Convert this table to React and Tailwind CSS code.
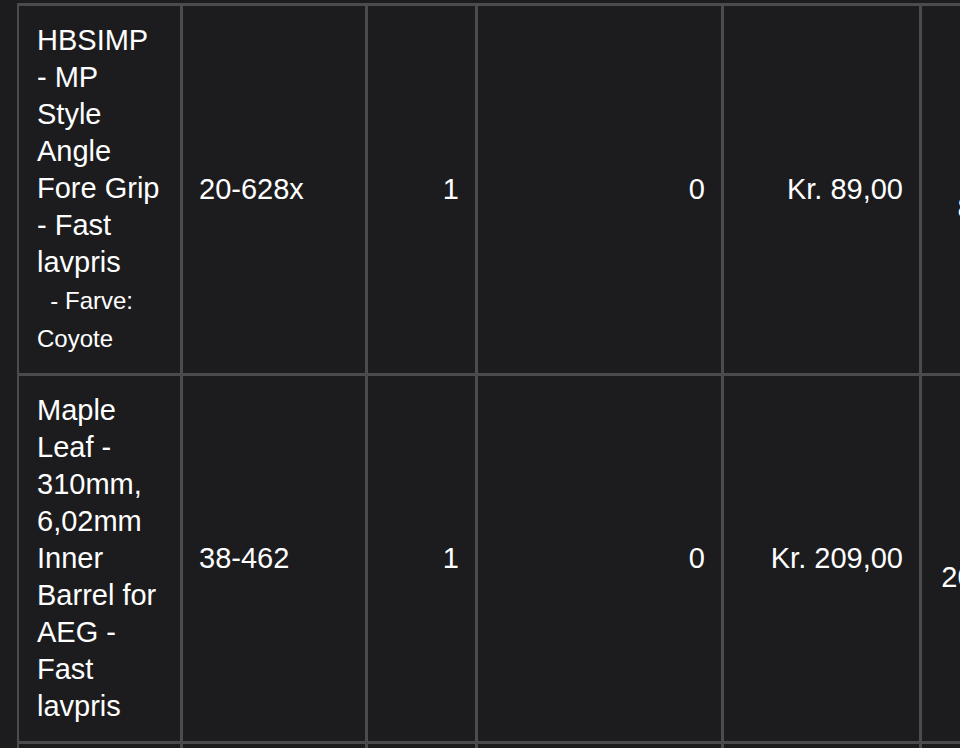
import React from "react";

const rows = [
  {
    name: "HBSIMP - MP Style Angle Fore Grip - Fast lavpris",
    variant: "- Farve: Coyote",
    sku: "20-628x",
    qty: "1",
    stock: "0",
    price: "Kr. 89,00",
    total: "Kr. 89,00",
  },
  {
    name: "Maple Leaf - 310mm, 6,02mm Inner Barrel for AEG - Fast lavpris",
    sku: "38-462",
    qty: "1",
    stock: "0",
    price: "Kr. 209,00",
    total: "Kr. 209,00",
  },
];

const cell = "border-r-[3px] border-b-[3px] border-[#4b4b4d] py-4";

const OrderTable = () => (
  <div className="ml-[17px] mt-[3px] w-[1032px] grid grid-cols-[164px_185px_110px_246px_198px_127px] border-l-2 border-t-[3px] border-[#4b4b4d]">
    {rows.map((r) => (
      <React.Fragment key={r.sku}>
        <div className={`${cell} pl-[18px] pr-[17px]`}>
          {r.name}
          {r.variant && (
            <>
              <br />
              <span className="text-[24px]">{"\u00a0\u00a0" + r.variant}</span>
            </>
          )}
        </div>
        <div className={`${cell} px-4 flex items-center`}>{r.sku}</div>
        <div className={`${cell} px-4 flex items-center justify-end`}>{r.qty}</div>
        <div className={`${cell} px-4 flex items-center justify-end`}>{r.stock}</div>
        <div className={`${cell} px-4 flex items-center justify-end`}>{r.price}</div>
        <div className={`${cell} px-4 flex items-center justify-end text-right`}>
          <span>{r.total}</span>
        </div>
      </React.Fragment>
    ))}
    {[0, 1, 2, 3, 4, 5].map((i) => (
      <div key={i} className={`${cell} h-[120px]`}></div>
    ))}
  </div>
);

export default function App() {
  return (
    <div
      className="w-[960px] h-[748px] overflow-hidden bg-[#1c1c1e] text-white text-[29px] leading-[37px]"
      style={{ fontFamily: '"Liberation Sans", Arial, sans-serif' }}
    >
      <OrderTable />
    </div>
  );
}
